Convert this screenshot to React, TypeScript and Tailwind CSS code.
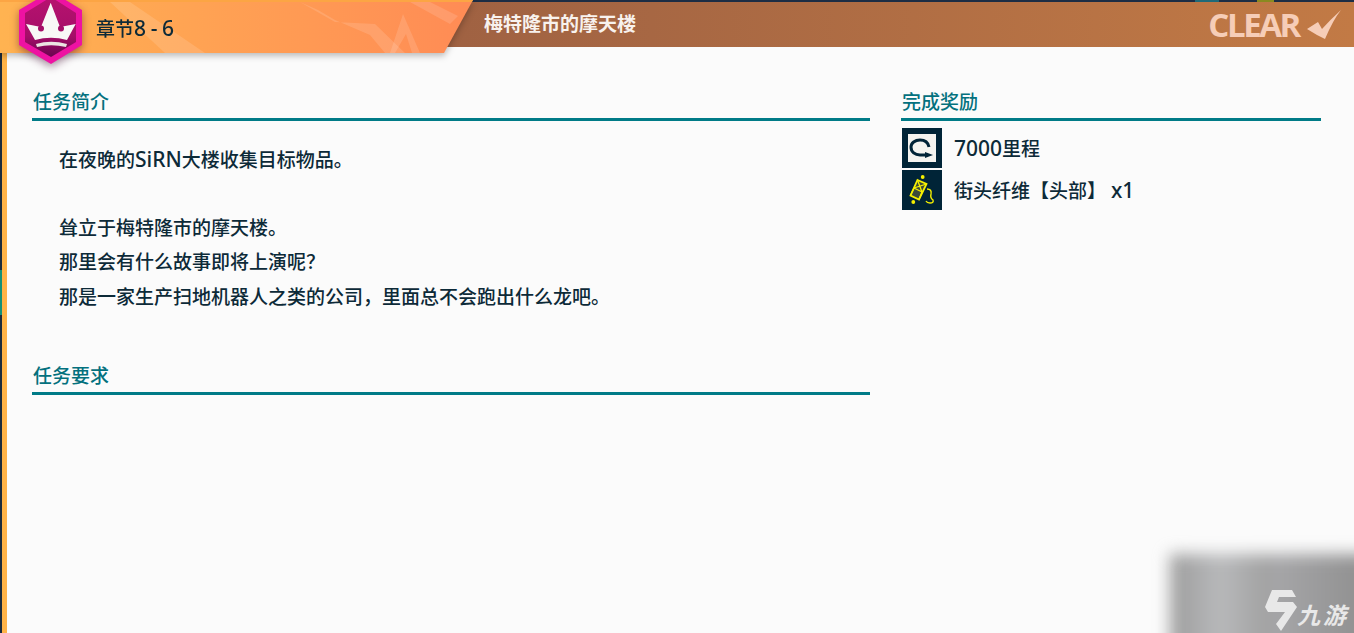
const font = { fontFamily: '"Noto Sans","Noto Sans CJK SC",sans-serif' };

function Crest() {
  return (
    <svg width="70" height="72" viewBox="16 0 70 72" className="absolute left-[16px] top-0 drop-shadow-[0_3px_4px_rgba(60,0,40,0.45)]">
      <defs>
        <linearGradient id="hex" x1="0" y1="0" x2="0" y2="1">
          <stop offset="0" stopColor="#b7126f" />
          <stop offset="0.65" stopColor="#a50e68" />
          <stop offset="1" stopColor="#6a0550" />
        </linearGradient>
      </defs>
      <polygon points="51,-9 82,10 82,45 51,64 19,45 19,10" fill="#ee12a2" />
      <polygon points="51,-3 76,13 76,42 51,57 25,42 25,13" fill="url(#hex)" />
      <path d="M50.700 2.700 L60 27 L75.700 24 L67 40 Q51 35.500 35 40 L26 24 L41 27 Z" fill="#f8f8f6" />
      <circle cx="61" cy="28.500" r="3" fill="#a50e68" />
      <circle cx="41" cy="28.500" r="3" fill="#a50e68" />
      <path d="M36 44 Q51 39.500 67 44 L66 47 Q51 43.500 37 47 Z" fill="#ebe6e2" />
    </svg>
  );
}

function Clear() {
  return (
    <div className="flex items-center text-[#f6cdb7]">
      <span className="text-[33px] leading-none font-bold tracking-[-2.400px]" style={{ fontFamily: '"Open Sans",sans-serif' }}>CLEAR</span>
      <svg width="36" height="32" viewBox="1306 7 36 32" className="ml-[7px]">
        <path d="M1307 27 L1318 20 L1322 27 Q1330 18 1341 8 Q1333 18 1325 37 L1317 33 Z" fill="#f6cdb7" />
      </svg>
    </div>
  );
}

function SectionTitle({ children }: { children: string }) {
  return (
    <div className="h-[31px] border-b-[3px] border-[#007b87] pl-px text-[19px] leading-[24px] font-medium text-[#04717e] whitespace-nowrap">
      {children}
    </div>
  );
}

function Latin({ children }: { children: string }) {
  return <span className="text-[21px] font-medium">{children}</span>;
}

function MileageIcon() {
  return (
    <div className="flex h-[40px] w-[40px] items-center justify-center bg-[#002437]">
      <div className="h-[28px] w-[28px] bg-[#f4f4f0]">
        <svg width="28" height="28" viewBox="0 0 28 28" fill="none">
          <path d="M21 13 C20 8 16 6 12 6 C7 6 3 9 3 13 C3 18 7 21 12 21 L20 21" stroke="#002437" strokeWidth="3" />
          <path d="M17 18 L25 21 L17 24 Z" fill="#002437" />
        </svg>
      </div>
    </div>
  );
}

function FiberIcon() {
  return (
    <div className="h-[40px] w-[40px] bg-[#002437]">
      <svg width="40" height="40" viewBox="0 0 40 40" fill="none" stroke="#f5f000" strokeWidth="1.800">
        <path d="M15.500 10 L24.500 14 L17 29.500 L8.500 25.500 Z" fill="#3c4a3a" />
        <path d="M15.500 10 L20 22 L17 29.500 M24.500 14 L12 18 M12 18 L8.500 25.500 M12 18 L20 22" strokeWidth="1.300" />
        <circle cx="20.700" cy="7" r="1.900" fill="#f5f000" stroke="none" />
        <circle cx="11.300" cy="32" r="1.900" fill="#f5f000" stroke="none" />
        <path d="M25 19 Q30 19 29 24 Q28 28 31 30 Q32 33 28 33 Q25 33 24 31" strokeWidth="1.400" />
      </svg>
    </div>
  );
}

function Reward({ icon, children }: { icon: React.ReactNode; children: React.ReactNode }) {
  return (
    <div className="flex h-[40px] items-center">
      {icon}
      <span className="mt-px ml-[12px] text-[19px] font-medium text-[#0d2a38] whitespace-pre">{children}</span>
    </div>
  );
}

export default function App() {
  return (
    <div className="relative flex h-[633px] w-[1354px] overflow-hidden bg-[#fbfbfb]" style={font}>
      <div className="flex w-[2px] shrink-0 flex-col bg-[#1b2a3a]">
        <div className="h-[270px]" />
        <div className="h-[45px] bg-[#129078]" />
      </div>
      <div className="w-[5px] shrink-0 bg-[#ffb347]" />

      <div className="flex min-w-0 flex-1 flex-col">
        <div className="flex h-[2px] bg-[#1d2d44]">
          <div className="ml-[1188px] w-[24px] bg-[#1f6a78]" />
          <div className="ml-[38px] w-[17px] bg-[#8a8a20]" />
        </div>
        <header className="flex h-[45px] items-center justify-between bg-gradient-to-r from-[#8f5640] to-[#c27a45] pr-[12px] pl-[477px]">
          <span className="text-[19px] leading-none font-bold text-[#f8f2ee] whitespace-nowrap">梅特隆市的摩天楼</span>
          <Clear />
        </header>

        <main className="flex flex-1 pt-[43px] pl-[25px]">
          <section className="w-[838px] shrink-0">
            <SectionTitle>任务简介</SectionTitle>
            <div className="mt-[21px] pl-[27px] text-[19px] leading-[34.500px] font-medium text-[#0d2a38]">
              <p className="whitespace-nowrap">在夜晚的<Latin>SiRN</Latin>大楼收集目标物品。</p>
              <p className="mt-[33px] whitespace-nowrap">耸立于梅特隆市的摩天楼。</p>
              <p className="whitespace-nowrap">那里会有什么故事即将上演呢？</p>
              <p className="whitespace-nowrap">那是一家生产扫地机器人之类的公司，里面总不会跑出什么龙吧。</p>
            </div>
            <div className="mt-[50px]">
              <SectionTitle>任务要求</SectionTitle>
            </div>
          </section>

          <aside className="ml-[31px] w-[420px] shrink-0">
            <SectionTitle>完成奖励</SectionTitle>
            <div className="mt-[7px] flex flex-col gap-[2px] pl-px">
              <Reward icon={<MileageIcon />}><Latin>7000</Latin>里程</Reward>
              <Reward icon={<FiberIcon />}>街头纤维【头部】 <Latin>x1</Latin></Reward>
            </div>
          </aside>
        </main>
      </div>

      {/* chapter banner laid over the top bar */}
      <div className="absolute top-0 left-0 h-[56px] w-[476px] drop-shadow-[0_3px_3px_rgba(0,0,0,0.25)]">
        <div className="h-[53px] w-[473px] bg-gradient-to-r from-[#ffb351] to-[#ff8b55] [clip-path:polygon(0_0,100%_0,444px_100%,0_100%)]">
          <div className="h-[2px] bg-[#fca544]" />
          <svg width="473" height="51" viewBox="0 0 473 51" className="absolute top-[2px] left-0" fill="#ffffff" fillOpacity="0.13">
            <path d="M130 0 L205 51 L165 51 L110 0 Z" />
            <path d="M300 0 L335 20 L375 22 L405 51 L385 51 L370 33 L335 18 L318 8 Z" />
            <path d="M403 12 L420 51 L412 51 L406 32 L395 51 L390 51 Z" />
            <path d="M410 0 L450 22 L458 14 L430 0 Z" />
          </svg>
          <span className="absolute top-[16px] left-[96px] text-[19px] leading-[24px] font-medium text-[#0d2a38] whitespace-nowrap">章节<span className="text-[21px] font-medium tracking-[-0.400px]">8 - 6</span></span>
        </div>
      </div>
      <Crest />

      {/* blurred watermark patch */}
      <div className="absolute top-[554px] left-[1170px] h-[100px] w-[210px] bg-gradient-to-r from-[#9c9c9c] via-[#a6a6a8] to-[#8c8c8c] blur-[8px]">
        <div className="h-full w-[100px] bg-gradient-to-r from-[#9c9c9c] via-[#b8b9bb] to-[#a0a0a0]" />
      </div>
      <svg width="34" height="44" viewBox="1264 589 34 44" className="absolute top-[589px] left-[1264px]">
        <path d="M1272 590 L1292 590 L1296 597 L1279 597 L1277 602 L1293 602 L1297 607 L1281 631 L1276 624 L1285 612 L1268 612 L1265 607 Z" fill="#e8e8e8" />
      </svg>
      <span className="absolute top-[603px] left-[1297px] text-[23px] leading-[24px] font-bold tracking-[3px] text-[#e8e8e8] italic whitespace-nowrap">九游</span>
    </div>
  );
}
